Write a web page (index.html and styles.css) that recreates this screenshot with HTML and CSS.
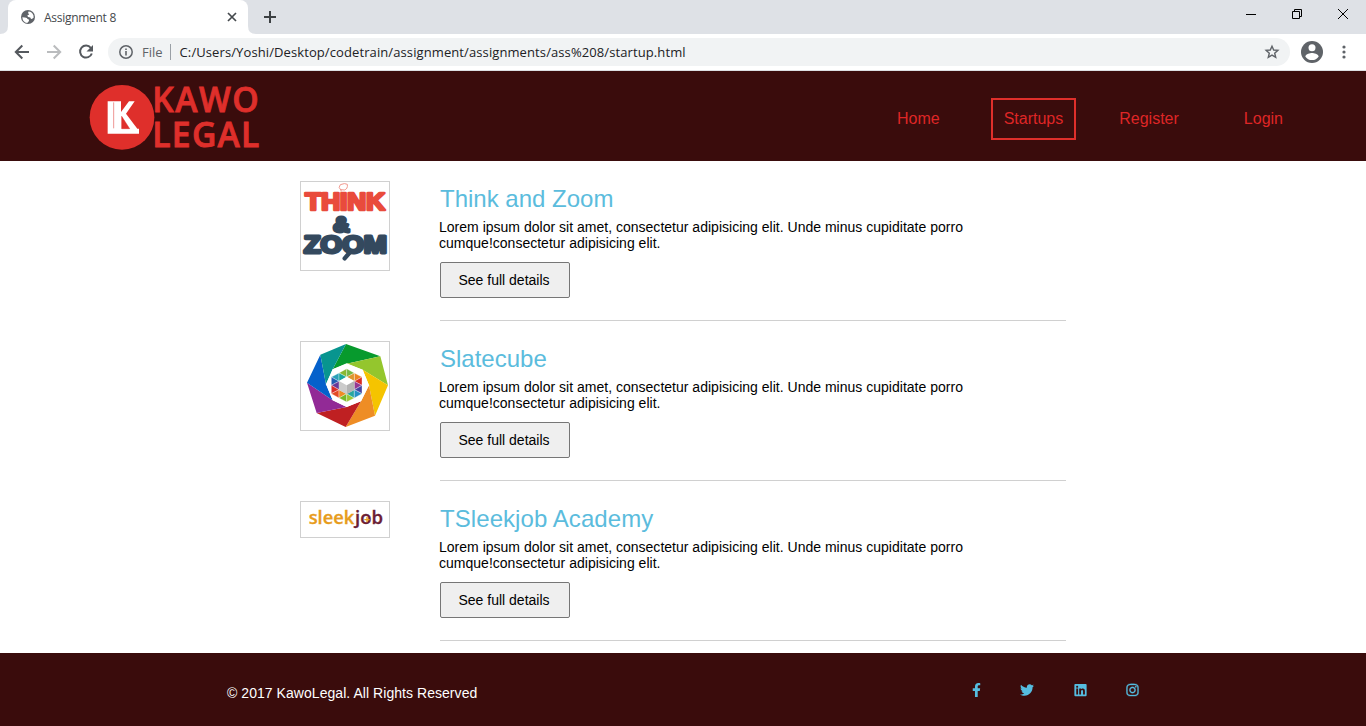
FILE: index.html
```html
<!DOCTYPE html>
<html lang="en">
<head>
<meta charset="utf-8">
<title>Assignment 8</title>
<link rel="stylesheet" href="styles.css">
</head>
<body>
<div class="tabstrip">
  <div class="tab">
    <svg class="globe" width="16" height="16" viewBox="0 0 16 16"><circle cx="8" cy="8" r="7" fill="#5f6368"/><path d="M2.3 8.2 5 8.4Q7.6 8.4 7.5 10q2 .2 1.5 2L7.2 14Q2.8 13.400 2.300 8.200ZM8.500 2.400Q12 2.600 13.500 6.400L13.600 8.800 11.800 9.900Q10.500 10.100 10.300 8.500 7.500 8.200 7.200 6.800 8 5.800 9.200 5.600 9.200 4.300 8 4.200Z" fill="#fff"/></svg>
    <span class="tab-title">Assignment 8</span>
    <svg class="tab-close" width="10" height="10" viewBox="0 0 10 10"><path d="M1 1l8 8M9 1l-8 8" stroke="#45494d" stroke-width="1.7"/></svg>
    <svg class="tab-curve" width="8" height="8" viewBox="0 0 8 8"><path d="M0 0Q0 8 8 8H0Z" fill="#fff"/></svg>
    <svg class="tab-curve tab-curve-left" width="8" height="8" viewBox="0 0 8 8"><path d="M8 0Q8 8 0 8H8Z" fill="#fff"/></svg>
  </div>
  <svg class="new-tab" width="12" height="12" viewBox="0 0 12 12"><path d="M6 0v12M0 6h12" stroke="#3c4043" stroke-width="2"/></svg>
  <div class="window-buttons">
    <svg width="10" height="10" viewBox="0 0 10 10"><path d="M0 5.500h10" stroke="#000"/></svg>
    <svg width="10" height="10" viewBox="0 0 10 10"><path d="M.5 2.500h7v7h-7zM2.500 2.500v-2h7v7h-2" fill="none" stroke="#000"/></svg>
    <svg width="10" height="10" viewBox="0 0 10 10"><path d="M0 0l10 10M10 0L0 10" stroke="#000"/></svg>
  </div>
</div>
<div class="toolbar">
  <svg class="tool" width="16" height="16" viewBox="0 0 16 16"><path d="M15 8H2M8.300 1.500 1.800 8l6.500 6.500" fill="none" stroke="#55595e" stroke-width="2"/></svg>
  <svg class="tool" width="16" height="16" viewBox="0 0 16 16"><path d="M1 8h13M7.700 1.500 14.200 8l-6.500 6.500" fill="none" stroke="#babcbe" stroke-width="2"/></svg>
  <svg class="tool" width="16" height="16" viewBox="0 0 16 16"><path d="M12.800 3.800A6 6 0 1 0 13.800 9.500" fill="none" stroke="#55595e" stroke-width="2"/><path d="M15 1v6.500H8.500Z" fill="#55595e"/></svg>
  <div class="omnibox">
    <svg width="14" height="14" viewBox="0 0 14 14"><circle cx="7" cy="7" r="6.200" fill="none" stroke="#5f6368" stroke-width="1.500"/><path d="M7 6v4.500M7 3.400v1.600" stroke="#5f6368" stroke-width="1.600"/></svg>
    <span class="scheme">File</span>
    <span class="url">C:/Users/Yoshi/Desktop/codetrain/assignment/assignments/ass%208/startup.html</span>
    <svg class="star" width="16" height="16" viewBox="0 0 16 16"><path d="M8 2.200 9.700 6l4.200.4-3.200 2.800 1 4.100L8 11.100l-3.700 2.200 1-4.100L2.100 6.400 6.300 6Z" fill="none" stroke="#5f6368" stroke-width="1.400"/></svg>
  </div>
  <svg class="avatar" width="22" height="22" viewBox="0 0 22 22"><circle cx="11" cy="11" r="11" fill="#5f6368"/><circle cx="11" cy="6.800" r="3.500" fill="#fff"/><path d="M4.300 15.400C5 12.800 9 12 11 12s6 .8 6.700 3.400A8 8 0 0 1 11 19a8 8 0 0 1-6.700-3.600Z" fill="#fff"/></svg>
  <svg class="more" width="4" height="14" viewBox="0 0 4 14"><g fill="#5f6368"><circle cx="2" cy="2" r="1.600"/><circle cx="2" cy="7" r="1.600"/><circle cx="2" cy="12" r="1.600"/></g></svg>
</div>
<header class="site-header">
  <svg class="brand" width="190" height="86" viewBox="27 0 570 258">
    <circle cx="126" cy="127" r="97" fill="#df2f2b"/>
    <path d="M83 79h40v32l24-32h17l-26 37 34 45h5v15H83Z" fill="#fff"/>
    <path d="M101 82v78M125 124l24 37h-24Z" fill="#df2f2b" stroke="#df2f2b" stroke-width="1.500"/>
    <g class="brand-text"><text x="217" y="112" textLength="319">KAWO</text><text x="217" y="215" textLength="321">LEGAL</text></g>
  </svg>
  <nav class="nav">
    <a class="home">Home</a><a class="active">Startups</a><a class="register">Register</a><a class="login">Login</a>
  </nav>
</header>
<main class="list">
  <article class="startup">
    <svg class="thumb" width="90" height="90" viewBox="33 30 264 264">
      <path d="M153 55Q143 46 151 38q14-6 21-1 2 14-9 17l-10-1v6" fill="none" stroke="#f2998f" stroke-width="3"/>
      <text class="think" x="46" y="113" textLength="239" lengthAdjust="spacingAndGlyphs">THINK</text>
      <text class="amp" x="129" y="179" textLength="50" lengthAdjust="spacingAndGlyphs">&amp;</text>
      <text class="zoom" x="41" y="244" textLength="250" lengthAdjust="spacingAndGlyphs">ZOOM</text>
      <path d="M178 243l-14 16" stroke="#34495e" stroke-width="13" stroke-linecap="round"/>
    </svg>
    <div class="info">
      <h2 class="t1">Think and Zoom</h2>
      <p><span class="l1">Lorem ipsum dolor sit amet, consectetur adipisicing elit. Unde minus cupiditate porro</span><br><span class="l2">cumque!consectetur adipisicing elit.</span></p>
      <button>See full details</button>
    </div>
  </article>
  <article class="startup">
    <svg class="thumb" width="90" height="90" viewBox="33 30 264 264">
      <path d="M168 36 271 73 170 95 128 112Z" fill="#079a2d"/>
      <path d="M271 73 294 160 218 113 170 95Z" fill="#94c62d"/>
      <path d="M294 160 255 251 237 160 218 113Z" fill="#f5c400"/>
      <path d="M255 251 167 285 213 208 237 160Z" fill="#ee8d25"/>
      <path d="M167 285 80 243 170 225 213 208Z" fill="#bf2022"/>
      <path d="M80 243 51 152 128 205 170 225Z" fill="#922a96"/>
      <path d="M51 152 91 68 108 157 128 205Z" fill="#0561cb"/>
      <path d="M91 68 168 36 128 112 108 157Z" fill="#08958f"/>
      <path d="M170 94 218 113 237 160 213 208 170 225 128 205 108 157 128 112Z" fill="#fff"/>
      <g stroke="#fff" stroke-width="1">
        <path d="M170 110v25l-23-12Z" fill="#88b832"/><path d="M170 110v25l23-12Z" fill="#75b843"/>
        <path d="M147 123v25l-23-13Z" fill="#2aa1b9"/><path d="M147 123v25l23-13Z" fill="#19a69d"/>
        <path d="M193 123v25l23-13Z" fill="#ed8422"/><path d="M193 123v25l-23-13Z" fill="#dd9630"/>
        <path d="M124 135v25l23-12Z" fill="#235db2"/><path d="M124 160l23-12v25Z" fill="#673998"/><path d="M124 160v25l23-12Z" fill="#d82d29"/>
        <path d="M216 135v25l-23-12Z" fill="#d92d24"/><path d="M216 160l-23-12v25Z" fill="#953892"/><path d="M216 160v25l-23-12Z" fill="#4543a1"/>
        <path d="M124 185l23-12v25Z" fill="#e34b24"/><path d="M147 173v25l23-13Z" fill="#ef8c25"/>
        <path d="M147 198l23-13v25Z" fill="#76b82a"/><path d="M170 185v25l23-12Z" fill="#9bc735"/>
        <path d="M170 185l23-12v25Z" fill="#27a69f"/><path d="M193 173v25l23-13Z" fill="#268fc6"/>
      </g>
      <path d="M170 134 193 147 170 160 147 147Z" fill="#fff"/><path d="M147 147 170 160v27l-23-13Z" fill="#cbcbcb"/><path d="M193 147 170 160v27l23-13Z" fill="#b3b3b3"/>
    </svg>
    <div class="info">
      <h2 class="t2">Slatecube</h2>
      <p><span class="l1">Lorem ipsum dolor sit amet, consectetur adipisicing elit. Unde minus cupiditate porro</span><br><span class="l2">cumque!consectetur adipisicing elit.</span></p>
      <button>See full details</button>
    </div>
  </article>
  <article class="startup">
    <svg class="thumb" width="90" height="37" viewBox="33 30 264 105">
      <text class="sleek" x="56" y="97" textLength="137" lengthAdjust="spacingAndGlyphs">sleek</text>
      <text class="job" x="195" y="97" textLength="84" lengthAdjust="spacingAndGlyphs">job</text>
      <path d="M231 75v16M223 83h16" stroke="#e79c1c" stroke-width="4"/>
    </svg>
    <div class="info">
      <h2 class="t3">TSleekjob Academy</h2>
      <p><span class="l1">Lorem ipsum dolor sit amet, consectetur adipisicing elit. Unde minus cupiditate porro</span><br><span class="l2">cumque!consectetur adipisicing elit.</span></p>
      <button>See full details</button>
    </div>
  </article>
</main>
<footer class="site-footer">
  <span class="copyright">© 2017 KawoLegal. All Rights Reserved</span>
  <div class="social">
    <svg width="9" height="14" viewBox="0 0 320 512"><path d="M279.140 288l14.220-92.660h-88.910v-60.130c0-25.350 12.420-50.060 52.240-50.060h40.420V6.260S260.430 0 225.360 0c-73.220 0-121.080 44.380-121.080 124.720v70.620H22.890V288h81.390v224h100.170V288z"/></svg>
    <svg width="14" height="14" viewBox="0 0 512 512"><path d="M459.370 151.716c.325 4.548.325 9.097.325 13.645 0 138.720-105.583 298.558-298.558 298.558-59.452 0-114.680-17.219-161.137-47.106 8.447.974 16.568 1.299 25.340 1.299 49.055 0 94.213-16.568 130.274-44.832-46.132-.975-84.792-31.188-98.112-72.772 6.498.974 12.995 1.624 19.818 1.624 9.421 0 18.843-1.300 27.614-3.573-48.081-9.747-84.143-51.980-84.143-102.985v-1.299c13.969 7.797 30.214 12.670 47.431 13.319-28.264-18.843-46.781-51.005-46.781-87.391 0-19.492 5.197-37.360 14.294-52.954 51.655 63.675 129.300 105.258 216.365 109.807-1.624-7.797-2.599-15.918-2.599-24.040 0-57.828 46.782-104.934 104.934-104.934 30.213 0 57.502 12.670 76.670 33.137 23.715-4.548 46.456-13.320 66.599-25.340-7.798 24.366-24.366 44.833-46.132 57.827 21.117-2.273 41.584-8.122 60.426-16.243-14.292 20.791-32.161 39.308-52.628 54.253z"/></svg>
    <svg width="13" height="14" viewBox="0 0 448 512"><path d="M416 32H31.900C14.300 32 0 46.500 0 64.300v383.400C0 465.500 14.300 480 31.900 480H416c17.600 0 32-14.500 32-32.300V64.300c0-17.800-14.400-32.300-32-32.300zM135.400 416H69V202.200h66.500V416zm-33.200-243c-21.300 0-38.500-17.300-38.500-38.500S80.900 96 102.200 96c21.200 0 38.500 17.300 38.500 38.500 0 21.300-17.200 38.500-38.500 38.500zm282.100 243h-66.400V312c0-24.800-.5-56.700-34.500-56.700-34.600 0-39.900 27-39.900 54.900V416h-66.400V202.200h63.700v29.200h.9c8.900-16.800 30.600-34.500 62.900-34.500 67.200 0 79.700 44.300 79.700 101.900V416z"/></svg>
    <svg class="instagram" width="13" height="14" viewBox="0 0 448 512"><path d="M224.100 141c-63.600 0-114.900 51.300-114.900 114.900s51.300 114.900 114.900 114.900S339 319.500 339 255.900 287.700 141 224.100 141zm0 189.600c-41.100 0-74.700-33.500-74.700-74.700s33.500-74.700 74.700-74.700 74.700 33.500 74.700 74.700-33.600 74.700-74.700 74.700zm146.400-194.300c0 14.900-12 26.800-26.800 26.800-14.900 0-26.800-12-26.800-26.800s12-26.800 26.800-26.800 26.800 12 26.800 26.800zm76.100 27.200c-1.700-35.900-9.900-67.700-36.200-93.900-26.200-26.200-58-34.400-93.900-36.200-37-2.100-147.900-2.100-184.900 0-35.800 1.700-67.600 9.900-93.900 36.100s-34.400 58-36.200 93.900c-2.100 37-2.100 147.900 0 184.900 1.700 35.900 9.900 67.700 36.200 93.900s58 34.400 93.900 36.200c37 2.100 147.900 2.100 184.900 0 35.900-1.700 67.700-9.900 93.900-36.200 26.200-26.200 34.400-58 36.200-93.900 2.100-37 2.100-147.800 0-184.800zM398.800 388c-7.800 19.600-22.900 34.700-42.600 42.600-29.500 11.700-99.500 9-132.100 9s-102.700 2.600-132.100-9c-19.600-7.800-34.700-22.900-42.600-42.600-11.700-29.500-9-99.500-9-132.100s-2.600-102.700 9-132.100c7.800-19.600 22.900-34.700 42.600-42.600 29.500-11.700 99.500-9 132.100-9s102.700-2.600 132.100 9c19.600 7.800 34.700 22.900 42.600 42.600 11.700 29.500 9 99.500 9 132.100s2.700 102.700-9 132.100z"/></svg>
  </div>
</footer>
</body>
</html>
```
FILE: styles.css
```css
* { box-sizing: border-box; }
body { margin: 0; height: 726px; overflow: hidden; background: #fff; color: #000; font-family: "Liberation Sans", Arial, sans-serif; display: flex; flex-direction: column; }
svg { display: block; flex: none; }

.tabstrip { height: 34px; flex: none; background: #dee1e6; display: flex; align-items: center; padding-left: 8px; }
.tab { position: relative; width: 240px; height: 34px; background: #fff; border-radius: 8px 8px 0 0; display: flex; align-items: center; padding: 0 11px 0 12px; }
.tab-title { font: 12px "Open Sans", sans-serif; color: #45494d; margin-left: 8px; letter-spacing: -.28px; flex: 1; white-space: nowrap; }
.tab-curve { position: absolute; right: -8px; bottom: 0; }
.tab-curve-left { right: auto; left: -8px; }
.new-tab { margin-left: 16px; }
.window-buttons { margin-left: auto; display: flex; gap: 36px; padding: 0 18px 6px 0; }

.toolbar { height: 37px; flex: none; display: flex; align-items: center; padding: 0 20px 1px 14px; border-bottom: 1px solid #dcdfe2; }
.tool { margin-right: 16px; }
.omnibox { width: 1182px; margin-left: -2px; height: 28px; border-radius: 14px; background: #f1f3f4; display: flex; align-items: center; padding: 0 10px 0 11px; white-space: nowrap; font: 13px "Open Sans", sans-serif; }
.scheme { color: #5f6368; margin-left: 9px; padding-right: 7px; border-right: 1px solid #9aa0a6; line-height: 16px; }
.url { color: #202124; margin-left: 9px; letter-spacing: .1px; }
.star { margin-left: auto; }
.avatar { margin-left: 11px; }
.more { margin-left: auto; }

.site-header { height: 90px; flex: none; background: #3a0c0c; display: flex; align-items: center; justify-content: space-between; padding: 0 70px 0 89px; }
.brand { margin-top: 3px; }
.brand-text { font: 600 101px "Open Sans", sans-serif; fill: #df2f2b; stroke: #df2f2b; stroke-width: 2.500px; }
.nav { display: flex; align-items: center; margin-top: 6px; }
.nav a { color: #df2626; font-size: 16px; line-height: 18px; padding: 10px 11px; border: 2px solid transparent; white-space: nowrap; height: 42px; }
.nav a.active { border-color: #df2f2b; margin: 0 30px 0 38px; }
.nav .login { margin-left: 39px; }

.list { height: 492px; flex: none; width: 766px; margin-left: 300px; padding-top: 20px; }
.startup { height: 160px; display: flex; align-items: flex-start; gap: 50px; }
.startup:last-child { height: 140px; }
.thumb { border: 1px solid #d0d0d0; }
.info { width: 626px; height: 140px; border-bottom: 1px solid #d0d0d0; }
.info h2 { margin: 4px 0 6px; font-size: 24px; font-weight: 400; line-height: 28px; color: #5bbcdd; }
.info .t3 { letter-spacing: .07px; }
.info p { margin: 0 0 11px -1px; font-size: 14px; line-height: 16px; white-space: nowrap; letter-spacing: .012px; }
.info button { display: block; width: 130px; height: 36px; padding: 0 2px 0 0; font: 14px "Liberation Sans", Arial, sans-serif; color: #000; background: #efefef; border: 1px solid #767676; border-radius: 2px; }
.think, .amp, .zoom { font-family: "Liberation Sans", Arial, sans-serif; font-weight: 700; font-size: 69px; stroke-width: 9px; stroke-linejoin: round; }
.think { fill: #e94b3c; stroke: #e94b3c; stroke-width: 8px; }
.amp { fill: #34495e; stroke: #34495e; font-size: 66px; }
.zoom { fill: #34495e; stroke: #34495e; }
.sleek { font: 600 52px "Open Sans", sans-serif; fill: #e79c1c; stroke: #e79c1c; }
.job { font: 600 52px "Open Sans", sans-serif; fill: #6b1d35; stroke: #6b1d35; }

.site-footer { height: 73px; flex: none; background: #3a0c0c; color: #fff; display: flex; align-items: center; justify-content: space-between; padding: 0 227px; }
.copyright { font-size: 14px; margin-top: 6px; letter-spacing: .05px; }
.social { display: flex; gap: 40px; fill: #55bde0; }
.social svg:first-child { margin-right: -1px; }
.social .instagram { margin-left: -1px; stroke: #55bde0; stroke-width: 12px; }
```
